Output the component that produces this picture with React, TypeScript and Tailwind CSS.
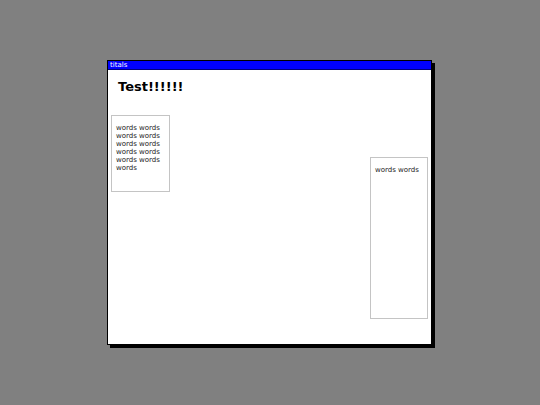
export default function App() {
  return (
    <div className="w-[540px] h-[405px] bg-[#808080] pt-[60px] pl-[107px]" style={{ fontFamily: '"DejaVu Sans", Verdana, sans-serif' }}>
      <div className="w-[325px] h-[285px] bg-white border border-black shadow-[3px_3px_0_#000] flex flex-col">
        <div className="h-[9px] bg-[#0000ff] border-b border-[#00007a] text-white text-[7px] leading-[8px] pl-[2px]">titals</div>
        <h1 className="mt-[9px] ml-[10px] text-[13px] leading-[16px] font-bold text-black">Test!!!!!!</h1>
        <div className="mt-[20px] flex justify-between items-start pl-[3px] pr-[3px]">
          <div className="w-[59px] h-[77px] border border-[#c4c4c4] px-[4px] pt-[8px] text-[7px] leading-[8px] text-[#222]">
            words words words words words words words words words words words
          </div>
          <div className="mt-[42px] w-[58px] h-[162px] border border-[#c4c4c4] px-[4px] pt-[8px] text-[7px] leading-[8px] text-[#222]">
            words words
          </div>
        </div>
      </div>
    </div>
  );
}
